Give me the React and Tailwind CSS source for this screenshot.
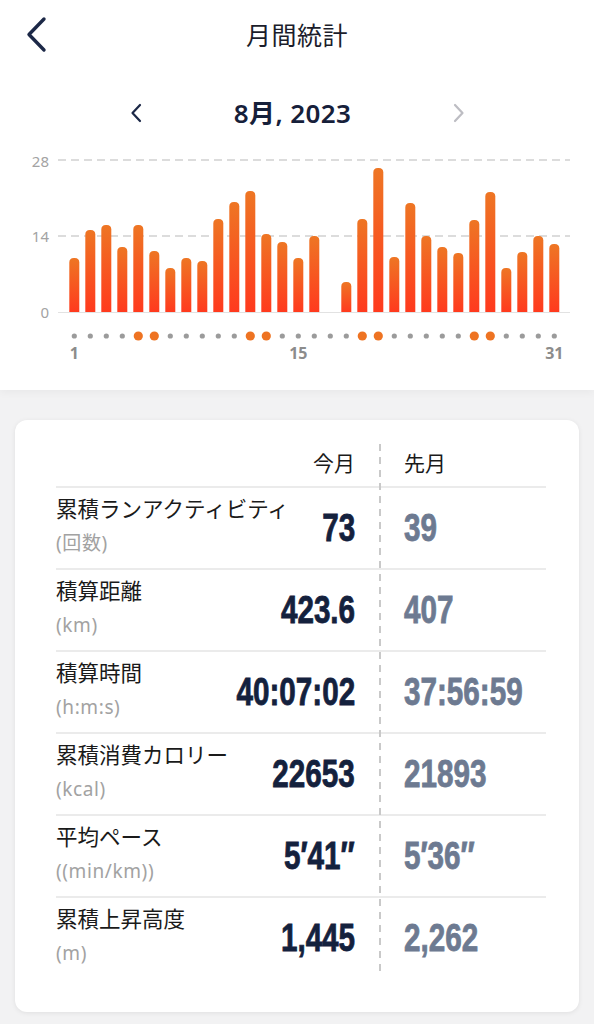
import React from "react"

const heights = [54, 82, 87, 65, 87, 61, 44, 54, 51, 93, 110, 121, 78, 70, 54, 76, 0, 30, 93, 144, 55, 109, 76, 65, 59, 92, 120, 44, 60, 76, 68]
const weekend = [5, 6, 12, 13, 19, 20, 26, 27]

const rows = [
    { label: "累積ランアクティビティ", unit: "(回数)", now: "73", prev: "39" },
    { label: "積算距離", unit: "(km)", now: "423.6", prev: "407" },
    { label: "積算時間", unit: "(h:m:s)", now: "40:07:02", prev: "37:56:59" },
    { label: "累積消費カロリー", unit: "(kcal)", now: "22653", prev: "21893" },
    { label: "平均ペース", unit: "((min/km))", now: "5′41″", prev: "5′36″" },
    { label: "累積上昇高度", unit: "(m)", now: "1,445", prev: "2,262" },
]

// chart svg starts at page y=155
const BASE = 157
const dayX = (i) => 74.3 + i * 16

const barPath = (cx, h) => {
    const x = cx - 5
    const w = 10
    const r = 4.5
    const y = BASE - h
    return `M${x},${BASE} V${y + r} Q${x},${y} ${x + r},${y} H${x + w - r} Q${x + w},${y} ${x + w},${y + r} V${BASE} Z`
}

const Chart = () => (
    <svg width="594" height="215" viewBox="0 0 594 215" className="block">
        <defs>
            <linearGradient id="bar" x1="0" y1="0" x2="0" y2="1">
                <stop offset="0" stopColor="#ee7624" />
                <stop offset="1" stopColor="#ff3a1e" />
            </linearGradient>
        </defs>
        <g fontFamily="'Noto Sans', sans-serif" fontSize="15" fill="#a3a3a3" textAnchor="end">
            <text x="49" y="12">28</text>
            <text x="49" y="86.5">14</text>
            <text x="49" y="162.5">0</text>
        </g>
        <line x1="58" y1="5" x2="570" y2="5" stroke="#b9b9b9" strokeWidth="1" strokeDasharray="8 5" />
        <line x1="58" y1="81" x2="570" y2="81" stroke="#b9b9b9" strokeWidth="1" strokeDasharray="8 5" />
        <line x1="58" y1={BASE + 0.5} x2="570" y2={BASE + 0.5} stroke="#e2e2e2" strokeWidth="1" />
        {heights.map((h, i) =>
            h > 0 ? <path key={i} d={barPath(dayX(i), h)} fill="url(#bar)" /> : null
        )}
        {heights.map((_, i) =>
            weekend.includes(i + 1) ? (
                <circle key={i} cx={dayX(i)} cy="181" r="4.6" fill="#ee7322" />
            ) : (
                <circle key={i} cx={dayX(i)} cy="181" r="2.6" fill="#9b9b9b" />
            )
        )}
        <g fontFamily="'Noto Sans', sans-serif" fontSize="16" fontWeight="700" fill="#8c8c8c" textAnchor="middle">
            <text x={dayX(0)} y="204">1</text>
            <text x={dayX(14)} y="204">15</text>
            <text x={dayX(30)} y="204">31</text>
        </g>
    </svg>
)

const App = () => {
    return (
        <div className="min-h-screen bg-[#f2f2f3] font-['Noto_Sans_CJK_JP',sans-serif] pb-[12px]">
            <div className="relative bg-white h-[390px] overflow-hidden shadow-[0_3px_8px_rgba(0,0,0,0.04)]">
                <div className="relative h-[70px] flex items-center justify-center">
                    <button className="absolute left-[22px] top-[14px] w-[30px] h-[40px] flex items-center justify-center">
                        <svg width="30" height="40" viewBox="0 0 30 40">
                            <polyline points="22,5 7,20.5 22,36" fill="none" stroke="#1c2847" strokeWidth="3.4" strokeLinecap="round" strokeLinejoin="round" />
                        </svg>
                    </button>
                    <h1 className="text-[25px] font-normal text-[#1b1d2b] tracking-[0.5px]">月間統計</h1>
                </div>

                <div className="mt-[23px] h-[40px] flex items-center justify-center">
                    <svg width="14" height="22" viewBox="0 0 14 22" className="mr-[84px]">
                        <polyline points="10,3 2.5,11 10,19" fill="none" stroke="#1c2847" strokeWidth="2.2" strokeLinecap="round" strokeLinejoin="round" />
                    </svg>
                    <span className="w-[130px] text-center text-[26px] font-semibold text-[#16203a] font-['Noto_Sans','Noto_Sans_CJK_JP',sans-serif] tracking-[0.4px]">
                        8月, 2023
                    </span>
                    <svg width="14" height="22" viewBox="0 0 14 22" className="ml-[93px]">
                        <polyline points="4,3 11.5,11 4,19" fill="none" stroke="#bdbdc3" strokeWidth="2.2" strokeLinecap="round" strokeLinejoin="round" />
                    </svg>
                </div>

                <div className="mt-[22px]">
                    <Chart />
                </div>
            </div>

            <div className="relative mx-[15px] mt-[30px] bg-white rounded-[12px] shadow-[0_1px_5px_rgba(0,0,0,0.08)] pl-[41px] pr-[33px] pb-[34px]">
                <div className="absolute left-[364px] top-[24px] h-[528px] w-[1.5px] bg-[repeating-linear-gradient(to_bottom,#c9c9c9_0px,#c9c9c9_7px,transparent_7px,transparent_13px)]" />

                <div className="h-[66px] flex pt-[29px] text-[21px] leading-[26px] text-[#1a1a1a]">
                    <div className="w-[299px] shrink-0 text-right">今月</div>
                    <div className="ml-[49px]">先月</div>
                </div>

                {rows.map((r) => (
                    <div key={r.label} className="h-[82px] border-t-2 border-[#ebebeb] flex items-center">
                        <div className="w-[299px] shrink-0 h-full flex justify-between items-center">
                            <div className="self-start pt-[6px] flex flex-col">
                                <span className="text-[21.5px] leading-[28px] text-[#1a1a1a] whitespace-nowrap">{r.label}</span>
                                <span className="mt-[7px] text-[19px] leading-[28px] text-[#a2a2a2] font-['Noto_Sans','Noto_Sans_CJK_JP',sans-serif] tracking-[0.6px]">{r.unit}</span>
                            </div>
                            <span className="inline-block shrink-0 origin-right scale-x-[0.78] text-[38px] leading-none font-bold text-[#14213d] [-webkit-text-stroke:0.8px_#14213d] font-['Liberation_Sans',Arial,sans-serif] whitespace-nowrap">{r.now}</span>
                        </div>
                        <span className="inline-block shrink-0 origin-left scale-x-[0.78] ml-[49px] text-[38px] leading-none font-bold text-[#6d7a91] [-webkit-text-stroke:0.8px_#6d7a91] font-['Liberation_Sans',Arial,sans-serif] whitespace-nowrap">{r.prev}</span>
                    </div>
                ))}
            </div>
        </div>
    )
}

export default App
